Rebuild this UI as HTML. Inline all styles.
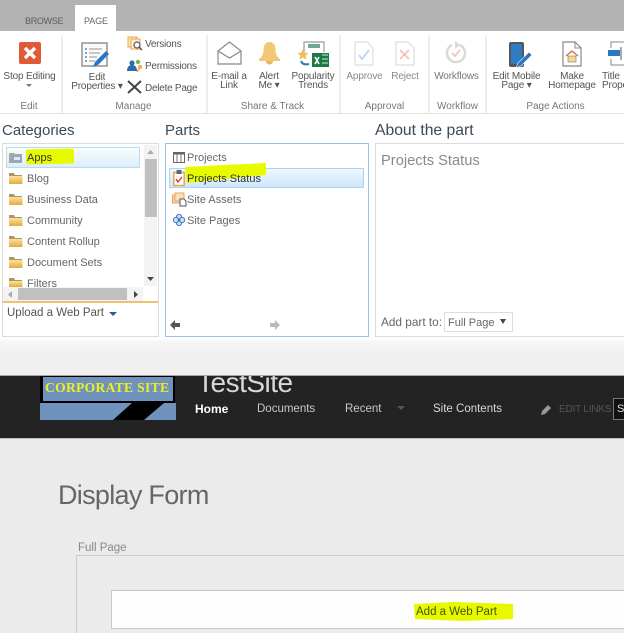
<!DOCTYPE html>
<html><head><meta charset="utf-8">
<style>
html,body{margin:0;padding:0;background:#fff}
#p{position:relative;width:624px;height:633px;overflow:hidden;background:#fff;font-family:"Liberation Sans",sans-serif;color:#555;filter:blur(.3px)}
#p div,#p span.a{position:absolute;white-space:nowrap}
.l{font-size:10px;line-height:9px;text-align:center;color:#555;letter-spacing:-.15px}
.s{font-size:10px;line-height:10px;color:#555;letter-spacing:-.25px}
.g{font-size:10px;line-height:10px;text-align:center;color:#777}
.h{font-size:15px;line-height:18px;color:#3a4a5a}
.c{font-size:11px;line-height:14px;color:#666}
.sep{width:2px;top:35px;height:78px;background:#eee}
svg{position:absolute;overflow:visible}
</style></head><body>
<div id="p">
<div style="left:0;top:0;width:624px;height:31px;background:#b3b3b3"></div>
<div style="left:75px;top:5px;width:41px;height:27px;background:#fff"></div>
<div style="left:25px;top:16px;font-size:9px;line-height:10px;color:#5c5c5c;letter-spacing:-.3px">BROWSE</div>
<div style="left:84px;top:16px;font-size:9px;line-height:10px;color:#666;letter-spacing:-.1px">PAGE</div>
<div style="left:0;top:113px;width:624px;height:1px;background:#e4e4e4"></div>
<div class="sep" style="left:61px"></div>
<div class="sep" style="left:206px"></div>
<div class="sep" style="left:339px"></div>
<div class="sep" style="left:428px"></div>
<div class="sep" style="left:485px"></div>

<!-- Stop editing -->
<svg style="left:19px;top:42px" width="22" height="22" viewBox="0 0 22 22"><rect width="22" height="22" rx="2" fill="#e05a35"/><path d="M6 6l10 10M16 6L6 16" stroke="#fff" stroke-width="3.4"/></svg>
<div class="l" style="left:0;top:72px;width:59px">Stop Editing</div>
<svg style="left:26px;top:84px" width="6" height="4"><path d="M0 0h6L3 3z" fill="#777"/></svg>
<div class="g" style="left:0;top:102px;width:58px">Edit</div>

<!-- Edit properties -->
<svg style="left:81px;top:42px" width="30" height="28" viewBox="0 0 30 28"><rect x="1" y="1" width="25" height="23" fill="#fafafa" stroke="#8a8a8a" stroke-width="1.4"/><path d="M4 7h2M4 11h2M4 15h2M4 19h2" stroke="#4a90c8" stroke-width="1.4"/><path d="M8 7h13M8 11h11M8 15h8M8 19h6" stroke="#aaa" stroke-width="1.2"/><path d="M12 25l2-5L25 9l3 3L17 23z" fill="#2b78c2"/></svg>
<div class="l" style="left:61px;top:73px;width:72px">Edit<br>Properties ▾</div>
<svg style="left:127px;top:36px" width="16" height="15" viewBox="0 0 16 15"><rect x="1" y="1" width="9" height="10" fill="#fbe3bb" stroke="#eba94a"/><rect x="4" y="3" width="9" height="10" fill="#fdf0d8" stroke="#eba94a"/><circle cx="10" cy="9" r="3" fill="#fff" stroke="#555" stroke-width="1.2"/><path d="M12 11l3 3" stroke="#555" stroke-width="1.4"/></svg>
<div class="s" style="left:145px;top:40px">Versions</div>
<svg style="left:127px;top:58px" width="17" height="15" viewBox="0 0 17 15"><circle cx="5" cy="5" r="2.6" fill="#2b6cb0"/><path d="M0 13c0-4 2-6 5-6s5 2 5 6z" fill="#2b6cb0"/><circle cx="11" cy="4" r="2.2" fill="#7fae5a"/><circle cx="13" cy="9" r="2" fill="#eba94a"/><path d="M12 11l-2 3" stroke="#eba94a" stroke-width="1.6"/></svg>
<div class="s" style="left:145px;top:62px">Permissions</div>
<svg style="left:127px;top:80px" width="15" height="14" viewBox="0 0 15 14"><path d="M1 1l13 12M14 1L1 13" stroke="#444" stroke-width="2"/></svg>
<div class="s" style="left:145px;top:84px">Delete Page</div>
<div class="g" style="left:61px;top:102px;width:145px">Manage</div>

<!-- Share & Track -->
<svg style="left:217px;top:41px" width="25" height="24" viewBox="0 0 25 24"><path d="M1 10L12.500 1 24 10v13H1z" fill="#fff" stroke="#888" stroke-width="1.2"/><path d="M1 10l11.500 7L24 10" fill="none" stroke="#888" stroke-width="1.2"/></svg>
<div class="l" style="left:208px;top:72px;width:42px">E-mail a<br>Link</div>
<svg style="left:258px;top:41px" width="23" height="24" viewBox="0 0 23 24"><path d="M11.500 1C7 1 5.500 5 5.500 9c0 5-2 7-4.500 9v2h21v-2c-2.500-2-4.500-4-4.500-9 0-4-1.500-8-6-8z" fill="#f2c877"/><path d="M8 20h7c0 2.500-1.500 3.500-3.500 3.500S8 22.500 8 20z" fill="#eab85f"/></svg>
<div class="l" style="left:250px;top:72px;width:38px">Alert<br>Me ▾</div>
<svg style="left:298px;top:40px" width="32" height="27" viewBox="0 0 32 27"><path d="M6 12V2h20v10" fill="none" stroke="#999" stroke-width="1.2"/><rect x="10" y="4" width="12" height="4" fill="#6ea796"/><path d="M5 9l1.700 3.600 3.800.4-2.800 2.600.8 3.900L5 17.600 1.500 19.500l.8-3.900L-.5 13l3.800-.4z" fill="#f0c060"/><rect x="14" y="13" width="17" height="14" fill="#1e7a45"/><path d="M24 15h6M24 19h6M24 23h6" stroke="#cfe8d8"/><path d="M17 17l4 7M21 17l-4 7" stroke="#fff" stroke-width="1.6"/><path d="M3 21c1 3 4 4 8 3" fill="none" stroke="#2b78c2" stroke-width="2"/></svg>
<div class="l" style="left:288px;top:72px;width:50px">Popularity<br>Trends</div>
<div class="g" style="left:206px;top:102px;width:133px">Share &amp; Track</div>

<!-- Approval -->
<svg style="left:354px;top:41px" width="20" height="25" viewBox="0 0 20 25"><path d="M1 1h12l6 6v17H1z" fill="#fff" stroke="#ddd" stroke-width="1.2"/><path d="M5 14l3 4 7-9" fill="none" stroke="#bcd4e8" stroke-width="1.8"/></svg>
<div class="l" style="left:341px;top:72px;width:47px;color:#8a8a8a">Approve</div>
<svg style="left:395px;top:41px" width="20" height="25" viewBox="0 0 20 25"><path d="M1 1h12l6 6v17H1z" fill="#fff" stroke="#ddd" stroke-width="1.2"/><path d="M5 9l9 9M14 9l-9 9" stroke="#f3c3b4" stroke-width="1.8"/></svg>
<div class="l" style="left:390px;top:72px;width:30px;color:#8a8a8a">Reject</div>
<div class="g" style="left:341px;top:102px;width:87px">Approval</div>

<!-- Workflow -->
<svg style="left:445px;top:41px" width="22" height="23" viewBox="0 0 22 23"><path d="M15 4A9 9 0 1 1 7 4" fill="none" stroke="#d8d8d8" stroke-width="2.400"/><path d="M10 0l5 4-5 4z" fill="#d8d8d8"/><path d="M7 12l3 3 5-6" fill="none" stroke="#f2c4b4" stroke-width="1.700"/></svg>
<div class="l" style="left:430px;top:72px;width:53px;color:#777">Workflows</div>
<div class="g" style="left:430px;top:102px;width:55px">Workflow</div>

<!-- Page Actions -->
<svg style="left:508px;top:41px" width="26" height="28" viewBox="0 0 26 28"><rect x="1" y="1" width="15" height="25" rx="2" fill="#55555c"/><rect x="3" y="3" width="11" height="20" fill="#2f7cc4"/><path d="M8 27l2-5L21 11l3 3L13 25z" fill="#2b78c2" stroke="#fff" stroke-width=".6"/></svg>
<div class="l" style="left:488px;top:72px;width:57px">Edit Mobile<br>Page ▾</div>
<svg style="left:562px;top:41px" width="20" height="26" viewBox="0 0 20 26"><path d="M1 1h12l6 6v18H1z" fill="#fff" stroke="#888" stroke-width="1.2"/><path d="M13 1v6h6" fill="none" stroke="#888"/><path d="M4 15l6-5 6 5" fill="none" stroke="#c9703c" stroke-width="1.400"/><rect x="6" y="15" width="8" height="6" fill="#f6d890" stroke="#777" stroke-width=".6"/></svg>
<div class="l" style="left:548px;top:72px;width:48px">Make<br>Homepage</div>
<svg style="left:608px;top:41px" width="20" height="26" viewBox="0 0 20 26"><path d="M3 7V1h17M3 18v6h17" fill="none" stroke="#888"/><rect x="0" y="9" width="12" height="6" fill="#2b78c2"/><path d="M13 6v13" stroke="#555"/></svg>
<div class="l" style="left:602px;top:72px;text-align:left">Title<br>Prope</div>
<div class="g" style="left:487px;top:102px;width:137px">Page Actions</div>

<!-- Panels bg -->
<div style="left:0;top:340px;width:624px;height:36px;background:linear-gradient(#f8f8f8,#f0f0f0 12px)"></div>

<div class="h" style="left:2px;top:122px">Categories</div>
<div class="h" style="left:165px;top:122px">Parts</div>
<div class="h" style="left:375px;top:122px;font-size:15.7px">About the part</div>

<!-- Categories box -->
<div style="left:2px;top:143px;width:155px;height:192px;border:1px solid #dcdcdc;background:#fff"></div>
<div style="left:6px;top:147px;width:132px;height:19px;border:1px solid #b5dcf6;background:linear-gradient(#f8fcff,#dceefb)"></div>
<div style="left:26px;top:149px;width:48px;height:15px;background:#e6fa00;border-radius:2px;transform:rotate(-1deg)"></div>
<svg width="0" height="0" style="left:0;top:0"><defs><linearGradient id="fo" x1="0" y1="0" x2="0" y2="1"><stop offset="0" stop-color="#fbe49a"/><stop offset="1" stop-color="#e6a93e"/></linearGradient></defs></svg>
<svg style="left:9px;top:151px" width="14" height="12" viewBox="0 0 14 12"><path d="M0 2h5l1 1h7v9H0z" fill="#b9a67a"/><rect x="1" y="4" width="12" height="7" fill="#8fa8c4"/><rect x="5" y="6" width="6" height="3" fill="#dfe8f2"/></svg>
<svg style="left:9px;top:172px" width="14" height="12" viewBox="0 0 14 12"><path d="M0 1h5l1 2h7v9H0z" fill="#a9976a"/><rect x="0" y="4" width="13.500" height="8" fill="url(#fo)"/></svg>
<svg style="left:9px;top:193px" width="14" height="12" viewBox="0 0 14 12"><path d="M0 1h5l1 2h7v9H0z" fill="#a9976a"/><rect x="0" y="4" width="13.500" height="8" fill="url(#fo)"/></svg>
<svg style="left:9px;top:214px" width="14" height="12" viewBox="0 0 14 12"><path d="M0 1h5l1 2h7v9H0z" fill="#a9976a"/><rect x="0" y="4" width="13.500" height="8" fill="url(#fo)"/></svg>
<svg style="left:9px;top:235px" width="14" height="12" viewBox="0 0 14 12"><path d="M0 1h5l1 2h7v9H0z" fill="#a9976a"/><rect x="0" y="4" width="13.500" height="8" fill="url(#fo)"/></svg>
<svg style="left:9px;top:256px" width="14" height="12" viewBox="0 0 14 12"><path d="M0 1h5l1 2h7v9H0z" fill="#a9976a"/><rect x="0" y="4" width="13.500" height="8" fill="url(#fo)"/></svg>
<svg style="left:9px;top:277px" width="14" height="10" viewBox="0 0 14 10"><path d="M0 1h5l1 2h7v7H0z" fill="#a9976a"/><rect x="0" y="4" width="13.500" height="6" fill="url(#fo)"/></svg>
<div class="c" style="left:27px;top:151px;color:#333">Apps</div>
<div class="c" style="left:27px;top:172px">Blog</div>
<div class="c" style="left:27px;top:193px">Business Data</div>
<div class="c" style="left:27px;top:214px">Community</div>
<div class="c" style="left:27px;top:235px">Content Rollup</div>
<div class="c" style="left:27px;top:256px">Document Sets</div>
<div class="c" style="left:27px;top:277px;height:10px;overflow:hidden">Filters</div>
<div style="left:144px;top:145px;width:13px;height:141px;background:#f3f3f3"></div>
<div style="left:145px;top:159px;width:12px;height:58px;background:#c0c0c0"></div>
<svg style="left:147px;top:150px" width="7" height="4"><path d="M0 4h7L3.500 0z" fill="#aaa"/></svg>
<svg style="left:147px;top:277px" width="7" height="4"><path d="M0 0h7L3.500 4z" fill="#444"/></svg>
<div style="left:3px;top:287px;width:140px;height:14px;background:#f3f3f3"></div>
<div style="left:18px;top:288px;width:109px;height:12px;background:#c0c0c0"></div>
<svg style="left:8px;top:291px" width="4" height="7"><path d="M4 0v7L0 3.500z" fill="#aaa"/></svg>
<svg style="left:134px;top:291px" width="4" height="7"><path d="M0 0v7l4-3.500z" fill="#444"/></svg>
<div style="left:3px;top:301px;width:155px;height:2px;background:#f0c170"></div>
<div class="c" style="left:7px;top:306px;color:#555;font-size:11.500px">Upload a Web Part</div>
<svg style="left:109px;top:312px" width="8" height="4"><path d="M0 0h8L4 4z" fill="#1f5fa8"/></svg>

<!-- Parts box -->
<div style="left:165px;top:143px;width:202px;height:192px;border:1px solid #9cc0ea;background:#fff"></div>
<div style="left:169px;top:168px;width:193px;height:18px;border:1px solid #a9d4f2;background:linear-gradient(#eef7fe,#cfe7fa)"></div>
<svg style="left:173px;top:152px" width="12" height="11" viewBox="0 0 12 11"><rect x=".5" y=".5" width="11" height="10" fill="#fff" stroke="#666"/><path d="M0 1.500h12" stroke="#666" stroke-width="2"/><path d="M4 2v8M8 2v8" stroke="#777"/></svg>
<svg style="left:186px;top:163px;overflow:visible" width="80" height="20" viewBox="0 0 80 20"><path d="M-1 4l81-4v12l-79 8z" fill="#e6fa00"/></svg>
<svg style="left:173px;top:170px" width="12" height="16" viewBox="0 0 12 16"><rect x=".8" y="2.500" width="10.400" height="13" fill="#fff" stroke="#e8a65a" stroke-width="1.500"/><rect x="3.500" y="0" width="5" height="4" fill="#666"/><path d="M3 9l2 3 4-5" fill="none" stroke="#d8362a" stroke-width="1.400"/></svg>
<svg style="left:172px;top:192px" width="15" height="14" viewBox="0 0 15 14"><rect x="0.500" y="3" width="9" height="8" fill="#f6d3a4" stroke="#e9a860"/><rect x="3" y="1" width="9" height="8" fill="#f9e0bd" stroke="#e9a860"/><path d="M8 7h4l2 2v5H8z" fill="#fff" stroke="#555"/></svg>
<svg style="left:173px;top:214px" width="12" height="12" viewBox="0 0 12 12"><circle cx="6" cy="3" r="2.600" fill="#cfe2f3" stroke="#3f78b8"/><circle cx="6" cy="9" r="2.600" fill="#cfe2f3" stroke="#3f78b8"/><circle cx="3" cy="6" r="2.600" fill="#cfe2f3" stroke="#3f78b8"/><circle cx="9" cy="6" r="2.600" fill="#cfe2f3" stroke="#3f78b8"/><circle cx="6" cy="6" r="1.500" fill="#3f78b8"/></svg>
<div class="c" style="left:187px;top:151px">Projects</div>
<div class="c" style="left:187px;top:172px;color:#333">Projects Status</div>
<div class="c" style="left:187px;top:193px">Site Assets</div>
<div class="c" style="left:187px;top:214px">Site Pages</div>
<svg style="left:170px;top:320px" width="10" height="10" viewBox="0 0 10 10"><path d="M0 5l5-5v3h5v4H5v3z" fill="#555"/></svg>
<svg style="left:270px;top:320px" width="10" height="10" viewBox="0 0 10 10"><path d="M10 5L5 0v3H0v4h5v3z" fill="#bbb"/></svg>

<!-- About box -->
<div style="left:375px;top:143px;width:250px;height:192px;border:1px solid #dcdcdc;background:#fff"></div>
<div style="left:381px;top:153px;font-size:14.700px;line-height:16px;color:#8a8a8a">Projects Status</div>
<div class="c" style="left:381px;top:315px;font-size:11.800px">Add part to:</div>
<div style="left:444px;top:312px;width:67px;height:18px;border:1px solid #ddd;background:#fff"></div>
<div class="c" style="left:448px;top:316px">Full Page</div>
<svg style="left:500px;top:319px" width="6" height="5"><path d="M0 0h6L3 5z" fill="#444"/></svg>

<!-- Dark nav -->
<div style="left:0;top:375px;width:624px;height:1px;background:#aaa"></div>
<div style="left:0;top:376px;width:624px;height:62px;background:#232323"></div>
<div style="left:0;top:438px;width:624px;height:195px;background:#ebebeb;border-top:1px solid #bbb"></div>
<div style="left:40px;top:403px;width:136px;height:17px;background:#6f93bd"></div>
<div style="left:40px;top:376px;width:135px;height:27px;background:#000"></div>
<div style="left:43px;top:377px;width:130px;height:24px;background:#6f93bd"></div>
<svg style="left:113px;top:403px" width="52" height="17" viewBox="0 0 52 17"><path d="M0 17L19 0h32L31 17z" fill="#000"/></svg>
<div style="left:45px;top:381px;font-family:'Liberation Serif',serif;font-size:13.500px;line-height:14px;font-weight:bold;color:#f0f020;letter-spacing:.35px">CORPORATE SITE</div>
<div style="left:197px;top:376px;width:100px;height:22px;overflow:hidden"><span class="a" style="left:0;top:-10px;font-size:28px;line-height:34px;color:#d8d8d8;font-weight:normal;letter-spacing:-.5px">TestSite</span></div>
<div style="left:195px;top:402px;font-size:12px;line-height:14px;font-weight:bold;color:#fff">Home</div>
<div style="left:257px;top:402px;font-size:11.500px;line-height:14px;color:#c8c8c8">Documents</div>
<div style="left:345px;top:402px;font-size:11.500px;line-height:14px;color:#c8c8c8">Recent</div>
<svg style="left:397px;top:406px" width="8" height="4"><path d="M0 0h8L4 4z" fill="#555"/></svg>
<div style="left:433px;top:402px;font-size:11.500px;line-height:14px;color:#d8d8d8">Site Contents</div>
<svg style="left:541px;top:404px" width="11" height="11" viewBox="0 0 11 11"><path d="M0 11l1-4 6-6 3 3-6 6z" fill="#999"/></svg>
<div style="left:559px;top:404px;font-size:10px;line-height:12px;color:#555;letter-spacing:-.2px">EDIT LINKS</div>
<div style="left:613px;top:398px;width:14px;height:20px;border:1px solid #777;background:#111;color:#ddd;font-size:11px;line-height:20px;text-indent:3px">S</div>

<!-- Page -->
<div style="left:58px;top:479px;font-size:27px;line-height:32px;color:#666;letter-spacing:-.7px">Display Form</div>
<div style="left:78px;top:542px;font-size:11.500px;line-height:13px;color:#888">Full Page</div>
<div style="left:76px;top:555px;width:560px;height:90px;border:1px solid #ccc"></div>
<div style="left:111px;top:590px;width:530px;height:37px;border:1px solid #c8c8c8;background:#fdfdfd"></div>
<svg style="left:414px;top:600px" width="100" height="21" viewBox="0 0 100 21"><path d="M0 4L40 2 99 4v15l-50 2L1 19z" fill="#e8f800"/></svg>
<div style="left:416px;top:605px;font-size:11.500px;line-height:14px;color:#3f5a00">Add a Web Part</div>
</div>
</body></html>
